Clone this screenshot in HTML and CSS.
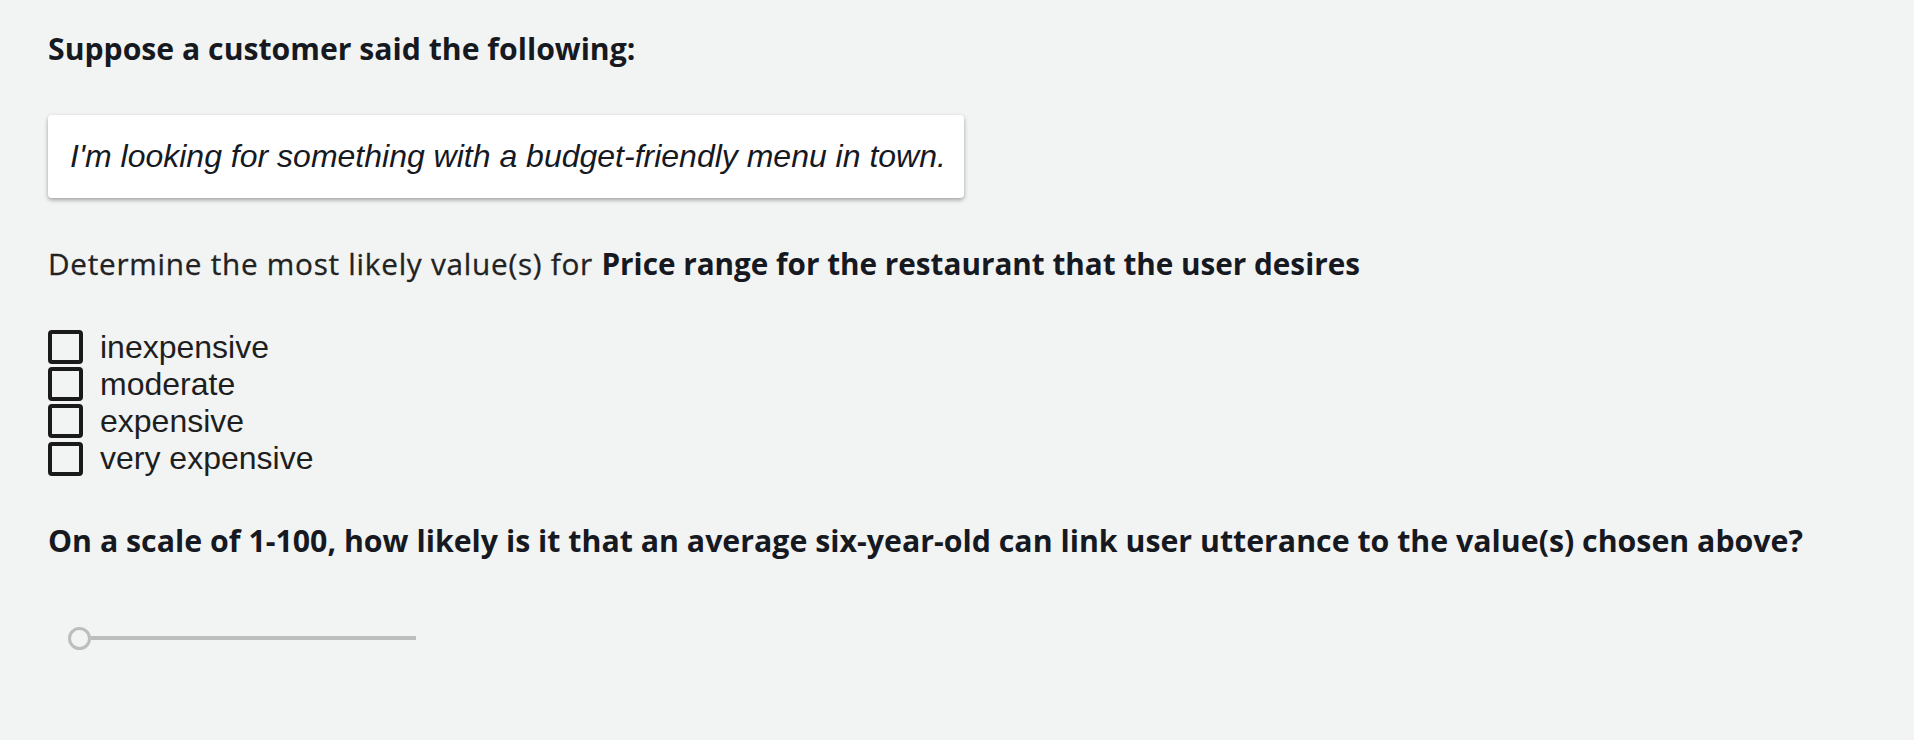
FILE: index.html
```html
<!DOCTYPE html>
<html lang="en">
<head>
<meta charset="utf-8">
<title>Price range task</title>
<link rel="stylesheet" href="styles.css">
</head>
<body>
<main class="page">
  <h1 class="prompt">Suppose a customer said the following:</h1>
  <div class="quote">I'm looking for something with a budget-friendly menu in town.</div>
  <p class="question"><span class="lead">Determine the most likely value(s) for </span><strong>Price range for the restaurant that the user desires</strong></p>
  <div class="options">
    <label class="option"><input type="checkbox" class="box"><span>inexpensive</span></label>
    <label class="option"><input type="checkbox" class="box"><span>moderate</span></label>
    <label class="option"><input type="checkbox" class="box"><span>expensive</span></label>
    <label class="option"><input type="checkbox" class="box"><span>very expensive</span></label>
  </div>
  <h2 class="scale-q">On a scale of 1-100, how likely is it that an average six-year-old can link user utterance to the value(s) chosen above?</h2>
  <div class="slider" role="slider" aria-valuemin="1" aria-valuemax="100" aria-valuenow="1">
    <span class="thumb"></span>
    <span class="track"></span>
  </div>
</main>
</body>
</html>
```

FILE: styles.css
```css
html, body {
  margin: 0;
  padding: 0;
  background: #f2f3f3;
}

.page {
  padding: 29px 48px 0;
  font-family: "Open Sans", "Noto Sans", sans-serif;
  color: #16191f;
}

.prompt {
  margin: 0;
  font-size: 30.2px;
  font-weight: 700;
  line-height: 40px;
  color: #16191f;
}

.quote {
  display: inline-block;
  margin-top: 46px;
  padding: 23px 18px 23px 22px;
  background: #ffffff;
  border-radius: 4px;
  box-shadow: 0 2px 4px rgba(0, 0, 0, 0.34);
  font-family: "Liberation Sans", Arial, sans-serif;
  font-style: italic;
  font-size: 32px;
  line-height: 37px;
  color: #16191f;
}

.question {
  margin: 46px 0 0;
  font-size: 29.7px;
  font-weight: 400;
  line-height: 40px;
  color: #222222;
}

.question .lead {
  letter-spacing: 0.75px;
  -webkit-text-stroke: 0.3px #222222;
}

.question strong {
  font-weight: 700;
  color: #16191f;
}

.options {
  margin-top: 44.5px;
  display: flex;
  flex-direction: column;
}

.option {
  display: flex;
  align-items: center;
  height: 37.2px;
  font-family: "Liberation Sans", Arial, sans-serif;
  font-size: 32px;
  line-height: 37.2px;
  color: #1e1e1e;
}

.box {
  appearance: none;
  -webkit-appearance: none;
  margin: 0 17px 0 0;
  width: 35px;
  height: 34px;
  box-sizing: border-box;
  border: 4px solid #1a1a1a;
  border-radius: 4px;
  background: transparent;
  flex: none;
}

.scale-q {
  margin: 43.8px 0 0;
  font-size: 30.3px;
  font-weight: 700;
  line-height: 40px;
  color: #16191f;
}

.slider {
  margin-top: 65.1px;
  margin-left: 20px;
  height: 24px;
  display: flex;
  align-items: center;
}

.thumb {
  width: 23px;
  height: 23px;
  box-sizing: border-box;
  border: 3px solid #bdbdbd;
  border-radius: 50%;
  flex: none;
}

.track {
  width: 325px;
  height: 4px;
  background: #bdbdbd;
  flex: none;
}
```
